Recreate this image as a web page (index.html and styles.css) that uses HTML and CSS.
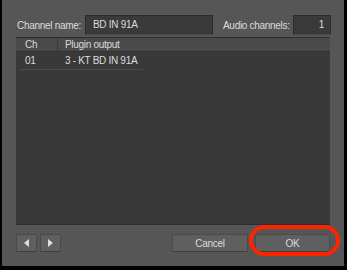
FILE: index.html
```html
<!DOCTYPE html>
<html lang="en">
<head>
    <meta charset="UTF-8">
    <title>Channel Properties</title>
    <link rel="stylesheet" href="styles.css">
</head>
<body>
    <div class="dialog">
        <div class="top-row">
            <span class="label">Channel name:</span>
            <div class="field field-name">BD IN 91A</div>
            <span class="label label-audio">Audio channels:</span>
            <div class="field field-count">1</div>
        </div>

        <div class="table">
            <div class="table-head">
                <div class="col-ch">Ch</div>
                <div class="col-out">Plugin output</div>
            </div>
            <div class="table-row">
                <div class="col-ch">01</div>
                <div class="col-out">3 - KT BD IN 91A</div>
            </div>
        </div>

        <div class="bottom-row">
            <button class="btn btn-arrow"><span class="tri tri-left"></span></button>
            <button class="btn btn-arrow"><span class="tri tri-right"></span></button>
            <div class="spacer"></div>
            <button class="btn btn-wide">Cancel</button>
            <div class="ok-wrap">
                <button class="btn btn-wide">OK</button>
                <div class="highlight"></div>
            </div>
        </div>
    </div>
</body>
</html>
```

FILE: styles.css
```css
* {
    margin: 0;
    padding: 0;
    box-sizing: border-box;
}

body {
    background: #000;
    width: 347px;
    height: 270px;
    overflow: hidden;
    font-family: 'Liberation Sans', Arial, sans-serif;
    font-size: 10px;
    letter-spacing: -0.3px;
    color: #dcdcdc;
}

.dialog {
    margin-left: 2px;
    width: 342px;
    height: 266px;
    background: #565656;
    padding: 15px 14px 0 14px;
    display: flex;
    flex-direction: column;
}

.top-row {
    display: flex;
    align-items: center;
    height: 20px;
    margin-bottom: 2px;
}

.top-row > * {
    flex-shrink: 0;
    white-space: nowrap;
}

.label {
    padding-left: 1px;
    width: 69px;
}

.label-audio {
    width: 65px;
    margin-left: 9px;
    margin-right: 6px;
}

.field {
    height: 20px;
    line-height: 18px;
    background: #3a3a3a;
    border: 1px solid #2c2c2c;
    border-bottom-color: #484848;
}

.field-name {
    width: 128px;
    padding-left: 7px;
}

.field-count {
    width: 38px;
    text-align: right;
    padding-right: 6px;
}

.table {
    width: 314px;
    height: 188px;
    background: #393939;
    border-top: 1px solid #2e2e2e;
    border-bottom: 1px solid #2e2e2e;
}

.table-head,
.table-row {
    display: flex;
}

.table-head {
    height: 14px;
    line-height: 14px;
    background: #4a4a4a;
    border-bottom: 1px solid #333;
}

.table-row {
    height: 18px;
    line-height: 17px;
    margin: 0 4px;
    border-bottom: 1px solid #4b4b4b;
    width: 123px;
}

.col-ch {
    width: 42px;
    padding-left: 9px;
    border-right: 1px solid #3a3a3a;
}

.table-row .col-ch {
    width: 38px;
    padding-left: 5px;
    border-right: none;
}

.col-out {
    padding-left: 7px;
    white-space: nowrap;
}

.bottom-row {
    display: flex;
    margin-top: 9px;
    height: 18px;
}

.btn {
    height: 18px;
    background: #5f5f5f;
    border: 1px solid #4a4a4a;
    border-bottom-color: #3e3e3e;
    color: #dcdcdc;
    font-family: inherit;
    font-size: 10px;
    letter-spacing: -0.3px;
    display: flex;
    align-items: center;
    justify-content: center;
}

.btn-arrow {
    width: 21px;
    margin-right: 3px;
}

.btn-wide {
    width: 76px;
}

.spacer {
    flex: 1;
}

.ok-wrap {
    position: relative;
    margin-left: 7px;
}

.ok-wrap .btn-wide {
    width: 75px;
}

.highlight {
    position: absolute;
    left: -6px;
    right: -10px;
    top: -9px;
    bottom: -4px;
    border: 4px solid #ff2400;
    border-radius: 16px;
}

.tri {
    width: 0;
    height: 0;
    border-top: 4px solid transparent;
    border-bottom: 4px solid transparent;
}

.tri-left {
    border-right: 5px solid #dedede;
}

.tri-right {
    border-left: 5px solid #dedede;
}
```
